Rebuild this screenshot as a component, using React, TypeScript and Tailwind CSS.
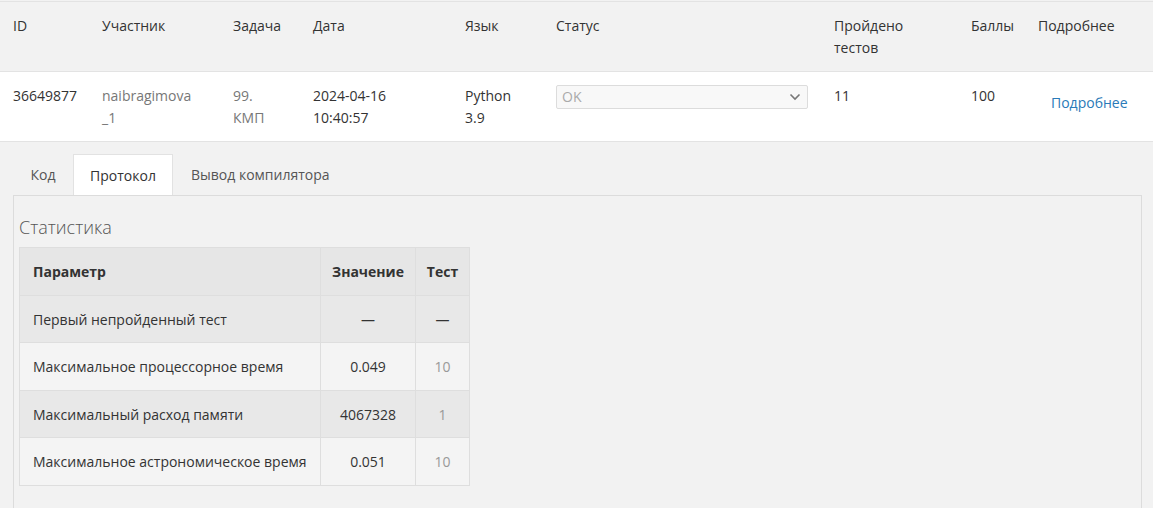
import React from 'react';

const font = { fontFamily: '"Open Sans", "Noto Sans", sans-serif' };

type StatRow = {
    name: string;
    value: string;
    test: string;
    muted?: boolean;
};

const stats: StatRow[] = [
    { name: 'Первый непройденный тест', value: '—', test: '—' },
    { name: 'Максимальное процессорное время', value: '0.049', test: '10', muted: true },
    { name: 'Максимальный расход памяти', value: '4067328', test: '1', muted: true },
    { name: 'Максимальное астрономическое время', value: '0.051', test: '10', muted: true },
];

const cols = 'grid grid-cols-[89px_131px_80px_152px_91px_278px_137px_67px_1fr]';

function SubmissionRow() {
    return (
        <div className="text-[14px] leading-[22px] text-[#333]">
            <div className={`${cols} h-[71px] border-t border-b border-[#e3e3e3] bg-[#f2f2f2] pt-[13px]`}>
                <div className="pl-[13px]">ID</div>
                <div className="pl-[13px]">Участник</div>
                <div className="pl-[13px]">Задача</div>
                <div className="pl-[13px]">Дата</div>
                <div className="pl-[13px]">Язык</div>
                <div className="pl-[13px]">Статус</div>
                <div className="pl-[13px]">Пройдено<br />тестов</div>
                <div className="pl-[13px]">Баллы</div>
                <div className="pl-[13px]">Подробнее</div>
            </div>
            <div className={`${cols} h-[70px] border-b border-[#e3e3e3] bg-white pt-[13px]`}>
                <div className="pl-[13px]">36649877</div>
                <div className="pl-[13px] text-[#777]">naibragimova<br />_1</div>
                <div className="pl-[13px] text-[#777]">99.<br />КМП</div>
                <div className="pl-[13px]">2024-04-16<br />10:40:57</div>
                <div className="pl-[13px]">Python<br />3.9</div>
                <div className="px-[13px]">
                    <div className="flex h-[24px] items-center justify-between rounded-[2px] border border-[#dcdcdc] bg-[#f8f8f8] pl-[5px] pr-[6px] text-[#aaa]">
                        <span>OK</span>
                        <svg width="12" height="8" viewBox="0 0 12 8" fill="none">
                            <path d="M1.5 1.5 L6 6 L10.5 1.5" stroke="#777" strokeWidth="1.6" />
                        </svg>
                    </div>
                </div>
                <div className="pl-[13px]">11</div>
                <div className="pl-[13px]">100</div>
                <div className="pl-[26px] pt-[7px]">
                    <a className="cursor-pointer text-[#2a7ab8]">Подробнее</a>
                </div>
            </div>
        </div>
    );
}

function Tabs() {
    return (
        <div className="flex pl-[13px] pt-[12px] text-[14px] text-[#555]">
            <div className="flex h-[41px] w-[60px] items-center justify-center">Код</div>
            <div className="-mb-px flex h-[41px] w-[100px] items-center justify-center border border-b-0 border-[#e2e2e2] bg-white text-[#333]">
                Протокол
            </div>
            <div className="flex h-[41px] items-center px-[18px]">Вывод компилятора</div>
        </div>
    );
}

function StatsTable() {
    return (
        <table className="w-[451px] border-collapse border border-[#dedede] text-[14px] text-[#333]">
            <thead>
                <tr className="h-[48px] bg-[#e6e6e6]">
                    <th className="border border-[#dedede] pl-[13px] text-left font-bold">Параметр</th>
                    <th className="w-[95px] border border-[#dedede] text-center font-bold">Значение</th>
                    <th className="w-[54px] border border-[#dedede] text-center font-bold">Тест</th>
                </tr>
            </thead>
            <tbody>
                {stats.map((row, i) => (
                    <tr key={row.name} className={i % 2 === 0 ? 'h-[47px] bg-[#e8e8e8]' : 'h-[48px] bg-[#f4f4f4]'}>
                        <td className="border border-[#dedede] pl-[13px]">{row.name}</td>
                        <td className="border border-[#dedede] text-center">{row.value}</td>
                        <td className={`border border-[#dedede] text-center ${row.muted ? 'text-[#999]' : ''}`}>{row.test}</td>
                    </tr>
                ))}
            </tbody>
        </table>
    );
}

export default function App() {
    return (
        <div style={font} className="min-h-[508px] overflow-hidden bg-[#f2f2f2] pt-px">
            <SubmissionRow />
            <Tabs />
            <div className="ml-[13px] mr-[11px] h-[330px] border border-[#dcdcdc] px-[5px] pt-[19px]">
                <div className="mb-[8px] text-[18px] font-light leading-[24px] text-[#555]">Статистика</div>
                <StatsTable />
            </div>
        </div>
    );
}
